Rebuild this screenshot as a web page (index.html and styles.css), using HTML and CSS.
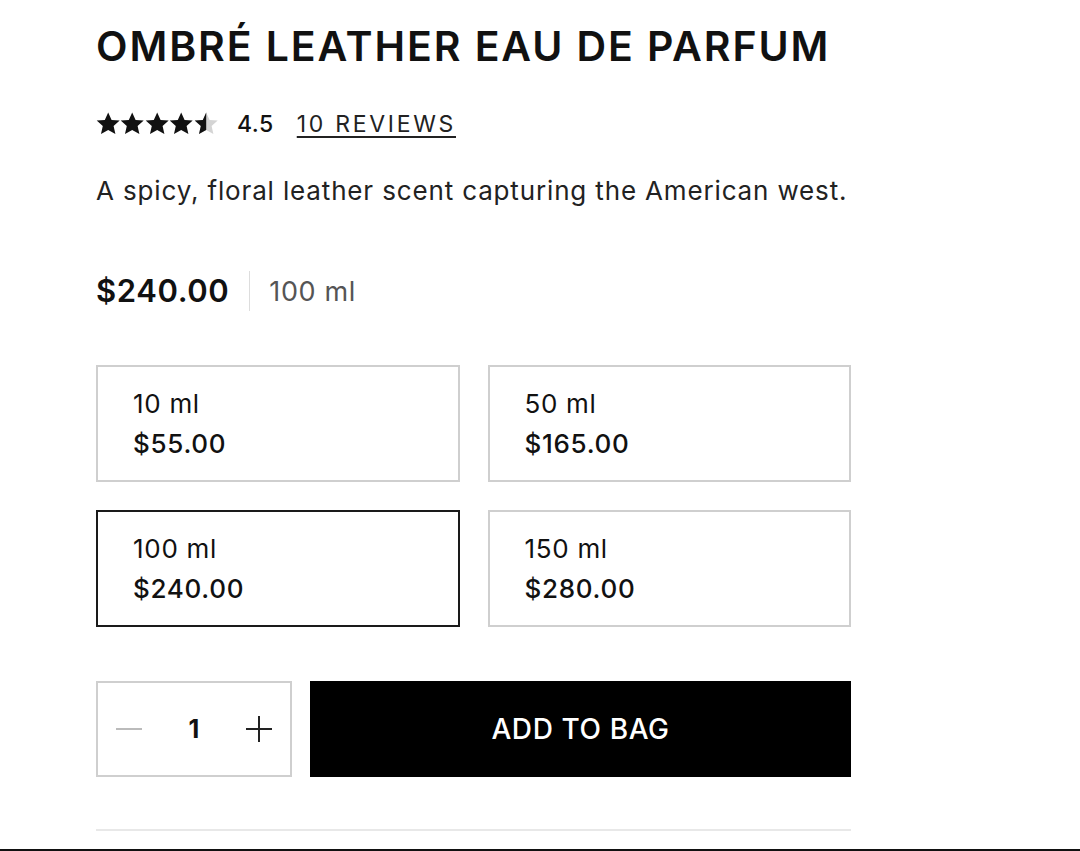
FILE: index.html
```html
<!DOCTYPE html>
<html lang="en">
<head>
  <meta charset="UTF-8">
  <title>Ombré Leather Eau de Parfum</title>
  <link rel="stylesheet" href="styles.css">
</head>
<body>
  <main class="product">
    <h1 class="title">OMBRÉ LEATHER EAU DE PARFUM</h1>

    <div class="rating">
      <span class="stars">
        <svg viewBox="0 0 24 24"><path d="M12 .5l3.4 7.4 8.1.7-6.1 5.4 1.8 8L12 17.9l-7.2 4.1 1.8-8-6.1-5.4 8.1-.7z"/></svg>
        <svg viewBox="0 0 24 24"><path d="M12 .5l3.4 7.4 8.1.7-6.1 5.4 1.8 8L12 17.9l-7.2 4.1 1.8-8-6.1-5.4 8.1-.7z"/></svg>
        <svg viewBox="0 0 24 24"><path d="M12 .5l3.4 7.4 8.1.7-6.1 5.4 1.8 8L12 17.9l-7.2 4.1 1.8-8-6.1-5.4 8.1-.7z"/></svg>
        <svg viewBox="0 0 24 24"><path d="M12 .5l3.4 7.4 8.1.7-6.1 5.4 1.8 8L12 17.9l-7.2 4.1 1.8-8-6.1-5.4 8.1-.7z"/></svg>
        <svg viewBox="0 0 24 24">
          <path class="empty" d="M12 .5l3.4 7.4 8.1.7-6.1 5.4 1.8 8L12 17.9l-7.2 4.1 1.8-8-6.1-5.4 8.1-.7z"/>
          <path d="M12 .5V17.9l-7.2 4.1 1.8-8-6.1-5.4 8.1-.7z"/>
        </svg>
      </span>
      <span class="score">4.5</span>
      <a class="reviews" href="#">10 REVIEWS</a>
    </div>

    <p class="desc">A spicy, floral leather scent capturing the American west.</p>

    <div class="price-row">
      <span class="price">$240.00</span>
      <span class="volume">100 ml</span>
    </div>

    <div class="sizes">
      <button class="size-opt"><span class="ml">10 ml</span><span class="cost">$55.00</span></button>
      <button class="size-opt"><span class="ml">50 ml</span><span class="cost">$165.00</span></button>
      <button class="size-opt selected"><span class="ml">100 ml</span><span class="cost">$240.00</span></button>
      <button class="size-opt"><span class="ml">150 ml</span><span class="cost">$280.00</span></button>
    </div>

    <div class="buy">
      <div class="qty">
        <button class="qty-btn minus"><svg viewBox="0 0 26 26"><path d="M0 13h26"/></svg></button>
        <span class="qty-num">1</span>
        <button class="qty-btn plus"><svg viewBox="0 0 26 26"><path d="M0 13h26M13 0v26"/></svg></button>
      </div>
      <button class="add">ADD TO BAG</button>
    </div>

    <hr class="rule">
  </main>
  <div class="bottom-edge"></div>
</body>
</html>
```

FILE: styles.css
```css
body {
  margin: 0;
  background: #fff;
  color: #111;
  font-family: Inter, 'Noto Sans', sans-serif;
}

.product {
  width: 755px;
  padding: 22px 0 0 96px;
}

.title {
  margin: 0;
  font-size: 41px;
  line-height: 48px;
  font-weight: 600;
  letter-spacing: 1.9px;
  color: #111;
}

.rating {
  display: flex;
  align-items: center;
  margin-top: 39px;
  height: 30px;
}

.stars {
  display: flex;
  width: 122px;
}

.stars svg {
  width: 24.4px;
  height: 24px;
  fill: #111;
}

.stars .empty {
  fill: #d4d4d4;
}

.score {
  margin-left: 19px;
  font-size: 23px;
  font-weight: 500;
  letter-spacing: 0.5px;
}

.reviews {
  margin-left: 23px;
  font-size: 23px;
  letter-spacing: 2.7px;
  color: #222;
  text-decoration: underline;
  text-underline-offset: 4px;
  text-decoration-thickness: 1.5px;
}

.desc {
  margin: 36px 0 0;
  font-size: 26px;
  line-height: 32px;
  letter-spacing: 0.85px;
  color: #222;
}

.price-row {
  display: flex;
  align-items: center;
  margin-top: 64px;
  height: 40px;
}

.price {
  font-size: 31px;
  font-weight: 600;
  letter-spacing: 0.6px;
  padding-right: 20px;
  border-right: 1.5px solid #ddd;
  line-height: 40px;
}

.volume {
  padding-left: 19px;
  font-size: 27px;
  letter-spacing: 0.6px;
  color: #555;
}

.sizes {
  display: grid;
  grid-template-columns: 1fr 1fr;
  gap: 28px;
  margin-top: 54px;
}

.size-opt {
  display: flex;
  flex-direction: column;
  justify-content: center;
  gap: 10px;
  height: 117px;
  padding: 0 0 0 35px;
  background: #fff;
  border: 2px solid #cfcfcf;
  font-family: inherit;
  text-align: left;
  color: #111;
  cursor: pointer;
}

.size-opt.selected {
  border-color: #1a1a1a;
}

.ml {
  font-size: 26px;
  line-height: 30px;
  letter-spacing: 0.7px;
}

.cost {
  font-size: 26px;
  line-height: 30px;
  font-weight: 500;
  letter-spacing: 0.7px;
}

.buy {
  display: flex;
  gap: 18px;
  margin-top: 54px;
  height: 96px;
}

.qty {
  display: flex;
  align-items: center;
  justify-content: space-between;
  width: 196px;
  box-sizing: border-box;
  border: 2px solid #cfcfcf;
  padding: 0 18px;
}

.qty-btn {
  background: none;
  border: none;
  padding: 0;
  width: 26px;
  height: 26px;
}

.qty-btn svg {
  width: 26px;
  height: 26px;
  fill: none;
  stroke-width: 2;
}

.minus svg {
  stroke: #bbb;
}

.plus svg {
  stroke: #222;
}

.qty-num {
  font-size: 25px;
  font-weight: 700;
}

.add {
  flex: 1;
  background: #000;
  color: #fff;
  border: none;
  font-family: inherit;
  font-size: 28px;
  font-weight: 500;
  letter-spacing: 0.6px;
  cursor: pointer;
}

.rule {
  margin: 52px 0 0;
  border: none;
  border-top: 2px solid #e8e8e8;
}

.bottom-edge {
  margin-top: 18px;
  height: 2px;
  background: #111;
}
```
